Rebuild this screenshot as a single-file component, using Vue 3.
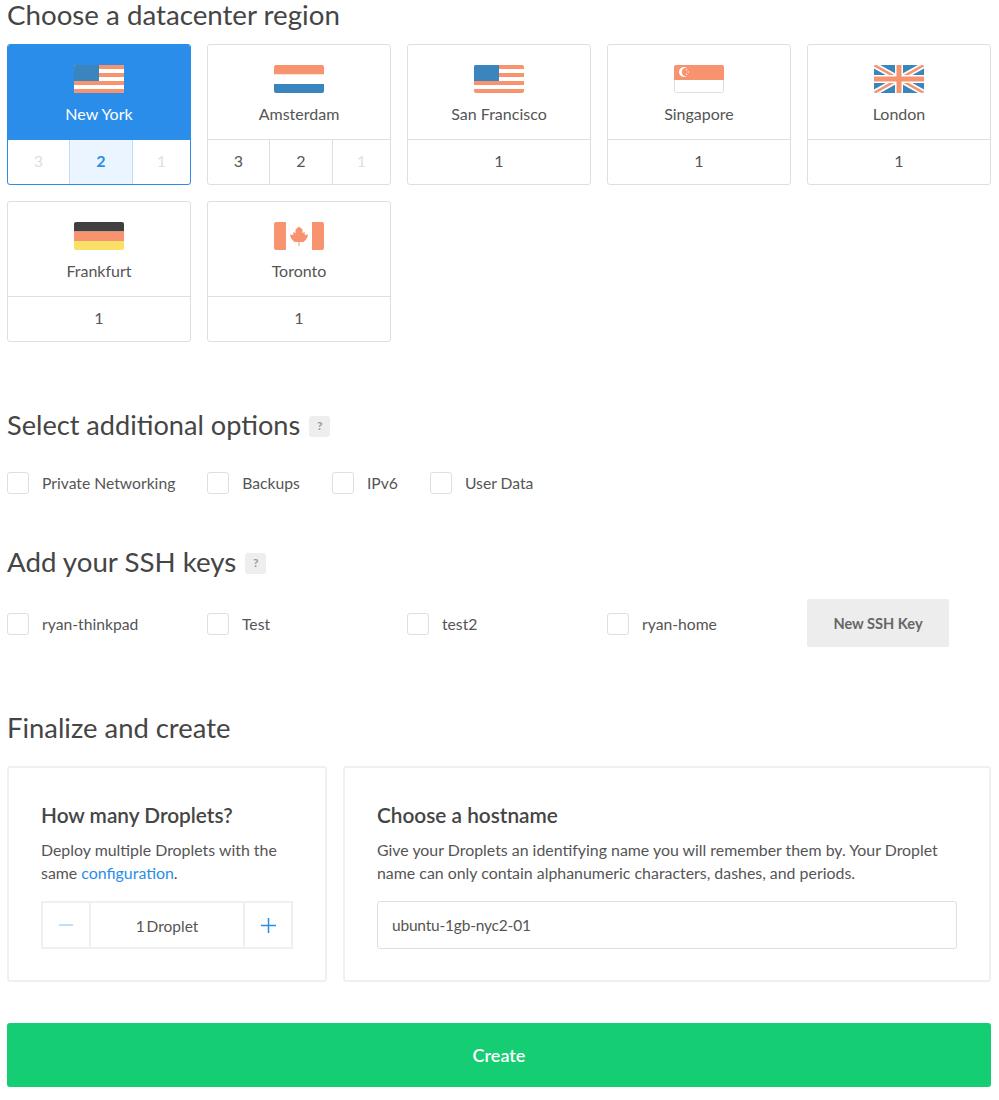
<script setup>
const regions = [
  { name: 'New York', flag: 'us', active: true, slots: [{ n: 3, off: true }, { n: 2, on: true }, { n: 1, off: true }] },
  { name: 'Amsterdam', flag: 'nl', slots: [{ n: 3 }, { n: 2 }, { n: 1, off: true }] },
  { name: 'San Francisco', flag: 'us', slots: [{ n: 1 }] },
  { name: 'Singapore', flag: 'sg', slots: [{ n: 1 }] },
  { name: 'London', flag: 'uk', slots: [{ n: 1 }] },
  { name: 'Frankfurt', flag: 'de', slots: [{ n: 1 }] },
  { name: 'Toronto', flag: 'ca', slots: [{ n: 1 }] }
]
const options = ['Private Networking', 'Backups', 'IPv6', 'User Data']
const keys = ['ryan-thinkpad', 'Test', 'test2', 'ryan-home']
</script>

<template>
  <div class="page">
    <h2 class="title first">Choose a datacenter region</h2>
    <div class="regions">
      <div v-for="r in regions" :key="r.name" class="region" :class="{ active: r.active }">
        <div class="region-top">
          <svg class="flag" width="50" height="28" viewBox="0 0 50 28">
            <defs>
              <clipPath :id="'clip-' + r.name.replace(' ', '')">
                <rect width="50" height="28" rx="2" />
              </clipPath>
            </defs>
            <g :clip-path="'url(#clip-' + r.name.replace(' ', '') + ')'">
              <template v-if="r.flag == 'us'">
                <rect width="50" height="28" fill="#fff" />
                <rect width="50" height="4" fill="#f7946f" />
                <rect y="8" width="50" height="4" fill="#f7946f" />
                <rect y="16" width="50" height="4" fill="#f7946f" />
                <rect y="24" width="50" height="4" fill="#f7946f" />
                <rect width="25" height="16" fill="#3a85bd" />
              </template>
              <template v-if="r.flag == 'nl'">
                <rect width="50" height="9.5" fill="#f7946f" />
                <rect y="9.5" width="50" height="9.5" fill="#fff" />
                <rect y="19" width="50" height="9" fill="#3a85bd" />
              </template>
              <template v-if="r.flag == 'sg'">
                <rect width="50" height="28" fill="#fff" />
                <rect x="0.5" y="0.5" width="49" height="27" rx="2" fill="none" stroke="#ddd" />
                <rect width="50" height="15" fill="#f7946f" />
                <circle cx="10" cy="7" r="5" fill="#fff" />
                <circle cx="12" cy="7" r="4.2" fill="#f7946f" />
                <circle cx="12.5" cy="4.8" r="0.7" fill="#fff" />
                <circle cx="14.2" cy="7" r="0.7" fill="#fff" />
                <circle cx="12.5" cy="9.2" r="0.7" fill="#fff" />
              </template>
              <template v-if="r.flag == 'uk'">
                <rect width="50" height="28" fill="#3a85bd" />
                <path d="M0 0L50 28M50 0L0 28" stroke="#fff" stroke-width="6" />
                <path d="M0 0L50 28M50 0L0 28" stroke="#f7946f" stroke-width="2.5" />
                <path d="M25 0V28M0 14H50" stroke="#fff" stroke-width="8" />
                <path d="M25 0V28M0 14H50" stroke="#f7946f" stroke-width="5" />
              </template>
              <template v-if="r.flag == 'de'">
                <rect width="50" height="9.5" fill="#404040" />
                <rect y="9.5" width="50" height="9.5" fill="#f7946f" />
                <rect y="19" width="50" height="9" fill="#fbe067" />
              </template>
              <template v-if="r.flag == 'ca'">
                <rect width="12" height="28" fill="#f7946f" />
                <rect x="38" width="12" height="28" fill="#f7946f" />
                <path d="M25 4.500L28.500 7.500V11.500L30 10L31 11L30.500 13L34 12.500L33.500 15L32 17.500L29.500 20H25.500V24H24.500V20H20.500L18 17.500L16.500 15L16 12.500L19.500 13L19 11L20 10L21.500 11.500V7.500Z" fill="#f7946f" />
              </template>
            </g>
          </svg>
          <div class="region-name">{{ r.name }}</div>
        </div>
        <div class="slots">
          <div v-for="s in r.slots" :key="s.n" class="slot" :class="{ off: s.off, on: s.on }">{{ s.n }}</div>
        </div>
      </div>
    </div>

    <h2 class="title options-title">
      Select additional options <span class="help">?</span>
    </h2>
    <div class="options">
      <label v-for="o in options" :key="o" class="check">
        <span class="box"></span>{{ o }}
      </label>
    </div>

    <h2 class="title keys-title">
      Add your SSH keys <span class="help">?</span>
    </h2>
    <div class="keys">
      <label v-for="k in keys" :key="k" class="check key">
        <span class="box"></span>{{ k }}
      </label>
      <button class="new-key">New SSH Key</button>
    </div>

    <h2 class="title final-title">Finalize and create</h2>
    <div class="panels">
      <div class="panel left">
        <h3>How many Droplets?</h3>
        <p>Deploy multiple Droplets with the same <a>configuration</a>.</p>
        <div class="stepper">
          <div class="step">
            <svg width="14" height="14" viewBox="0 0 14 14"><path d="M0 7H14" stroke="#a9d4fb" stroke-width="1.5" /></svg>
          </div>
          <div class="count">1 Droplet</div>
          <div class="step">
            <svg width="15" height="15" viewBox="0 0 15 15"><path d="M0 7.500H15M7.500 0V15" stroke="#2a8de9" stroke-width="1.5" /></svg>
          </div>
        </div>
      </div>
      <div class="panel right">
        <h3>Choose a hostname</h3>
        <p>Give your Droplets an identifying name you will remember them by. Your Droplet name can only contain alphanumeric characters, dashes, and periods.</p>
        <div class="hostname">ubuntu-1gb-nyc2-01</div>
      </div>
    </div>
    <button class="create">Create</button>
  </div>
</template>

<style>
body {
  background: #fff;
}
</style>

<style scoped>
.page {
  width: 984px;
  height: 1100px;
  padding-left: 7px;
  font-family: Lato, "Liberation Sans", sans-serif;
  color: #4d4d4d;
  overflow: hidden;
}

.title {
  margin: 0;
  font-size: 27.7px;
  line-height: 30px;
  font-weight: 400;
  color: #454545;
  display: flex;
  align-items: center;
  gap: 9px;
}

.regions {
  display: flex;
  flex-wrap: wrap;
  gap: 16px;
  margin-top: 14px;
}

.region {
  box-sizing: border-box;
  width: 184px;
  height: 141px;
  border: 1px solid #dfdfdf;
  border-radius: 3px;
  display: flex;
  flex-direction: column;
  overflow: hidden;
}

.region-top {
  height: 95px;
  box-sizing: border-box;
  padding-top: 20px;
  text-align: center;
  border-bottom: 1px solid #dfdfdf;
}

.flag {
  display: block;
  margin: 0 auto;
}

.region-name {
  margin-top: 10px;
  font-size: 16px;
  line-height: 22px;
  color: #555;
}

.slots {
  flex: 1;
  display: flex;
}

.slot {
  flex: 1;
  display: flex;
  align-items: center;
  justify-content: center;
  box-sizing: border-box;
  padding-bottom: 4px;
  font-size: 16px;
  color: #555;
  border-left: 1px solid #dfdfdf;
}

.slot:first-child {
  border-left: none;
}

.slot:first-child:not(:only-child) {
  flex: 0 0 61px;
}

.slot:nth-child(2) {
  flex: 0 0 63px;
}

.slot.off {
  color: #dfdfdf;
}

.region.active {
  border-color: #2a8de9;
}

.region.active .region-top {
  background: #2a8de9;
  border-bottom-color: #2a8de9;
}

.region.active .region-name {
  color: #fff;
}

.region.active .slot {
  border-left-color: #bcdefc;
}

.slot.on {
  background: #ebf5ff;
  color: #2a8de9;
  font-weight: 700;
}

.help {
  width: 21px;
  height: 21px;
  margin-top: 2px;
  background: #eee;
  border-radius: 3px;
  color: #999;
  font-size: 12px;
  font-weight: 700;
  display: flex;
  align-items: center;
  justify-content: center;
}

.options-title {
  margin-top: 68px;
  font-size: 27.15px;
}

.options {
  display: flex;
  gap: 32px;
  margin-top: 32px;
}

.check {
  display: flex;
  align-items: center;
  gap: 13px;
  font-size: 15.7px;
  line-height: 22px;
  color: #555;
}

.box {
  box-sizing: border-box;
  width: 22px;
  height: 22px;
  border: 1px solid #dfdfdf;
  border-radius: 3px;
  background: #fff;
}

.keys-title {
  margin-top: 53px;
}

.keys {
  display: flex;
  align-items: center;
  margin-top: 22px;
}

.key {
  width: 200px;
  padding-top: 2px;
}

.new-key {
  width: 142px;
  height: 48px;
  border: none;
  border-radius: 2px;
  background: #ededed;
  color: #666;
  font-family: inherit;
  font-size: 14.6px;
  font-weight: 700;
}

.final-title {
  margin-top: 66px;
  font-size: 27.4px;
}

.panels {
  display: flex;
  gap: 16px;
  margin-top: 23px;
}

.panel {
  box-sizing: border-box;
  height: 216px;
  border: 2px solid #f0f0f0;
  border-radius: 3px;
  padding: 31px 32px 32px;
}

.left {
  width: 320px;
}

.right {
  width: 648px;
}

h3 {
  margin: 0;
  font-size: 20.8px;
  line-height: 32px;
  font-weight: 600;
  color: #454545;
}

p {
  margin: 7px 0 0;
  font-size: 15.9px;
  line-height: 23px;
  color: #555;
}

a {
  color: #2a8de9;
}

.stepper {
  display: flex;
  box-sizing: border-box;
  height: 48px;
  width: 252px;
  margin-top: 17px;
  border: 2px solid #f0f0f0;
}

.step {
  width: 46px;
  display: flex;
  align-items: center;
  justify-content: center;
}

.count {
  flex: 1;
  box-sizing: border-box;
  padding-top: 2px;
  border-left: 2px solid #f0f0f0;
  border-right: 2px solid #f0f0f0;
  display: flex;
  align-items: center;
  justify-content: center;
  font-size: 15.5px;
  word-spacing: -2px;
  color: #555;
}

.hostname {
  box-sizing: border-box;
  height: 48px;
  margin-top: 17px;
  padding-left: 14px;
  padding-bottom: 1px;
  border: 1px solid #dfdfdf;
  border-radius: 3px;
  display: flex;
  align-items: center;
  font-size: 15.5px;
  letter-spacing: -0.2px;
  color: #555;
}

.create {
  display: block;
  width: 984px;
  height: 64px;
  margin-top: 41px;
  border: none;
  border-radius: 3px;
  background: #15cd72;
  color: #fff;
  font-family: inherit;
  font-size: 18px;
  font-weight: 600;
}
</style>
